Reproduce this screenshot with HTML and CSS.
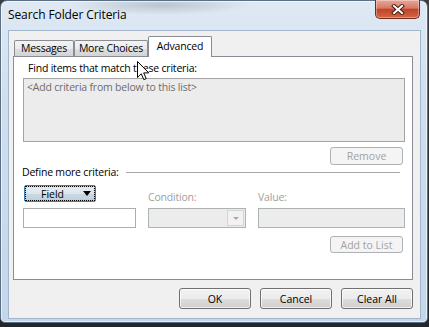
FILE: index.html
```html
<!DOCTYPE html>
<html lang="en">

<head>
    <meta charset="UTF-8">
    <meta name="viewport" content="width=device-width, initial-scale=1.0">
    <title>Search Folder Criteria</title>
    <link rel="stylesheet" href="styles.css">
</head>

<body>
    <div class="window">
        <div class="titlebar">
            <span class="title">Search Folder Criteria</span>
            <button type="button" class="close-btn" aria-label="Close">
                <svg width="14" height="11" viewBox="0 0 14 11">
                    <path d="M3 2 L11 9 M11 2 L3 9" stroke="#4a1c12" stroke-width="4" stroke-linecap="square" />
                    <path d="M3 2 L11 9 M11 2 L3 9" stroke="#fff" stroke-width="2" stroke-linecap="square" />
                </svg>
            </button>
        </div>

        <div class="client">
            <div class="tabs">
                <div class="tab tab-messages">Messages</div>
                <div class="tab tab-choices">More Choices</div>
                <div class="tab tab-advanced">Advanced</div>
            </div>

            <div class="panel">
                <div class="find-label">Find items that match these criteria:</div>
                <div class="criteria-list">&lt;Add criteria from below to this list&gt;</div>

                <div class="btn-row row-remove">
                    <button type="button" class="btn small" disabled>Remove</button>
                </div>

                <div class="define-row">
                    <span>Define more criteria:</span>
                    <span class="rule"></span>
                </div>

                <div class="criteria-grid">
                    <button type="button" class="field-btn">
                        <span>Field</span>
                        <span class="arrow"></span>
                    </button>
                    <span class="dim-label">Condition:</span>
                    <span class="dim-label">Value:</span>
                    <input type="text" class="textbox">
                    <div class="combo"><span class="combo-drop"><span class="combo-arrow"></span></span></div>
                    <input type="text" class="textbox disabled-box" disabled>
                </div>

                <div class="btn-row row-add">
                    <button type="button" class="btn small" disabled>Add to List</button>
                </div>
            </div>

            <div class="footer">
                <button type="button" class="btn">OK</button>
                <button type="button" class="btn">Cancel</button>
                <button type="button" class="btn">Clear All</button>
            </div>
        </div>
    </div>

    <!-- mouse pointer over the label -->
    <svg class="cursor" width="13" height="20" viewBox="0 0 13 20">
        <path d="M0.5 0.5 V16.5 L4.3 12.8 L6.8 18.6 L9.2 17.6 L6.7 11.9 H11.8 Z" fill="#fff" stroke="#000" stroke-width="1" />
    </svg>
</body>

</html>
```

FILE: styles.css
```css
* {
    box-sizing: border-box;
}

body {
    margin: 0;
    width: 429px;
    height: 327px;
    background: linear-gradient(to bottom, #3a3f46, #23272c);
    font-family: "Open Sans", "Segoe UI", sans-serif;
    font-size: 10.5px;
    letter-spacing: -0.2px;
    color: #000;
    position: relative;
    overflow: hidden;
}

/* Window frame */
.window {
    width: 428px;
    height: 323px;
    border: 1px solid #5d6f82;
    border-radius: 7px 7px 5px 5px;
    background:
        radial-gradient(ellipse 90px 10px at 160px 4px, rgba(120, 130, 140, 0.35), transparent),
        linear-gradient(to bottom, #dfe9f4 0%, #cfdff0 30%, #c3d6ec 100%);
    padding: 0 6px 3px 7px;
    display: flex;
    flex-direction: column;
    box-shadow: inset 0 0 0 1px rgba(255, 255, 255, 0.55);
}

.titlebar {
    height: 29px;
    display: flex;
    align-items: flex-start;
}

.title {
    margin-top: 6px;
    font-size: 12px;
    line-height: 16px;
    letter-spacing: -0.1px;
}

.close-btn {
    margin-left: auto;
    margin-right: 1px;
    margin-top: -1px;
    width: 45px;
    height: 19px;
    padding: 0;
    border: 1px solid #6e2b22;
    border-top: none;
    border-radius: 0 0 5px 5px;
    background: linear-gradient(to bottom, #e7a797 0%, #d87a64 45%, #c2432b 52%, #d0683f 100%);
    box-shadow: inset 0 0 0 1px rgba(255, 255, 255, 0.35);
    display: flex;
    align-items: center;
    justify-content: center;
}

/* Client area */
.client {
    flex: 1;
    background-color: #f0f0f0;
    border: 1px solid #a3b6ca;
    padding: 5px 7px 0 4px;
    display: flex;
    flex-direction: column;
}

.tabs {
    display: flex;
    align-items: flex-end;
    height: 20px;
    padding-left: 1px;
}

.tab {
    height: 16px;
    border: 1px solid #898c95;
    border-bottom: none;
    border-radius: 2px 2px 0 0;
    background: linear-gradient(to bottom, #f3f3f3 0%, #ebebeb 50%, #dedede 51%, #d3d3d3 100%);
    text-align: center;
    line-height: 15px;
    white-space: nowrap;
}

.tab-messages {
    width: 60px;
}

.tab-choices {
    width: 74px;
}

.tab-advanced {
    width: 64px;
    height: 21px;
    margin-bottom: -1px;
    background: #fff;
    line-height: 18px;
    position: relative;
    z-index: 1;
}

.panel {
    height: 224px;
    border: 1px solid #898c95;
    background-color: #fff;
    padding: 0 7px 0 9px;
}

.find-label {
    margin-top: 4px;
    padding-left: 5px;
    line-height: 15px;
}

.criteria-list {
    margin-top: 2px;
    height: 64px;
    border: 1px solid #a5a5a5;
    background-color: #ececec;
    padding: 1px 3px;
    color: #6d6d6d;
    line-height: 15px;
}

.btn-row {
    display: flex;
    justify-content: flex-end;
    padding-right: 2px;
}

.row-remove {
    margin-top: 5px;
}

.row-add {
    margin-top: 8px;
}

.define-row {
    margin-left: -1px;
    padding-right: 5px;
    height: 15px;
    line-height: 15px;
    display: flex;
    align-items: center;
    gap: 7px;
}

.rule {
    flex: 1;
    height: 1px;
    background-color: #a8a8a8;
}

.criteria-grid {
    margin-top: 5px;
    display: grid;
    grid-template-columns: 113px 98px 1fr;
    grid-template-rows: 20px 20px;
    column-gap: 12px;
    row-gap: 3px;
}

.dim-label {
    align-self: end;
    line-height: 15px;
    color: #a0a0a0;
}

.field-btn {
    align-self: start;
    margin-left: 1px;
    width: 72px;
    height: 17px;
    padding: 0 4px 0 16px;
    border: 1px solid #3c7fb1;
    border-radius: 2px;
    background: linear-gradient(to bottom, #e6eef3 0%, #dbe6ed 50%, #c9d9e3 51%, #bdd0dc 100%);
    box-shadow: inset 0 0 1px 1px rgba(120, 200, 235, 0.6);
    outline: 1px dotted #000;
    outline-offset: -2px;
    font: inherit;
    color: #000;
    display: flex;
    align-items: center;
}

.arrow {
    margin-left: auto;
    width: 0;
    height: 0;
    border-left: 4px solid transparent;
    border-right: 4px solid transparent;
    border-top: 5px solid #000;
}

.textbox {
    height: 20px;
    border: 1px solid #abadb3;
    background-color: #fff;
    margin: 0;
    padding: 0 3px;
    font: inherit;
}

.disabled-box {
    background-color: #ececec;
    border-color: #adb2b5;
}

.combo {
    height: 20px;
    border: 1px solid #adb2b5;
    background-color: #ececec;
    display: flex;
    justify-content: flex-end;
    padding: 1px;
}

.combo-drop {
    width: 17px;
    border: 1px solid #d2d4d6;
    background-color: #f2f2f2;
    display: flex;
    align-items: center;
    justify-content: center;
}

.combo-arrow {
    width: 0;
    height: 0;
    border-left: 3px solid transparent;
    border-right: 3px solid transparent;
    border-top: 3px solid #a7a7a7;
}

/* Buttons */
.btn {
    width: 72px;
    height: 21px;
    padding: 0;
    border: 1px solid #707070;
    border-radius: 3px;
    background: linear-gradient(to bottom, #f2f2f2 0%, #ebebeb 50%, #dddddd 51%, #cfcfcf 100%);
    box-shadow: inset 0 0 0 1px rgba(255, 255, 255, 0.7);
    font: inherit;
    color: #000;
}

.btn.small {
    width: 73px;
    height: 18px;
}

.btn:disabled {
    border-color: #adb2b5;
    background: #f4f4f4;
    box-shadow: none;
    color: #a3a3a3;
}

.row-add .btn.small {
    height: 17px;
}

.footer {
    margin-top: 8px;
    display: flex;
    justify-content: flex-end;
    gap: 9px;
}

.cursor {
    position: absolute;
    left: 137px;
    top: 61px;
}
```
